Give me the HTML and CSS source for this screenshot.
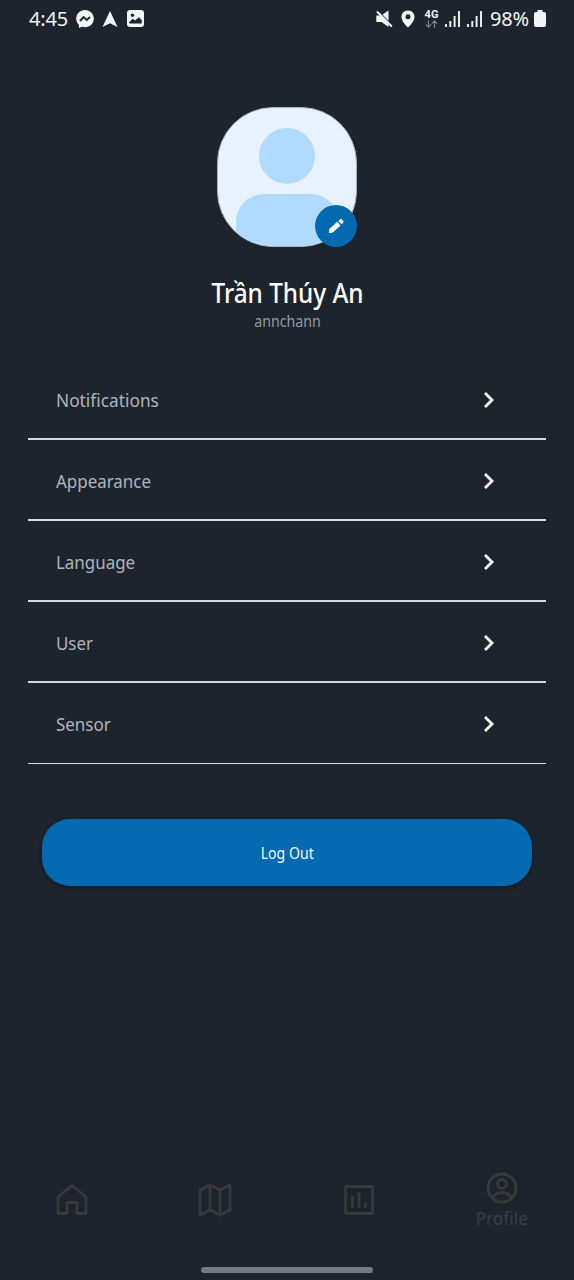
FILE: index.html
```html
<!DOCTYPE html>
<html lang="vi">
<head>
<meta charset="utf-8">
<title>Profile</title>
<link rel="stylesheet" href="styles.css">
</head>
<body>
<div class="screen">
  <header class="status">
    <div class="status-left">
      <span class="clock">4:45</span>
      <svg class="messenger" width="18" height="18" viewBox="0 0 18 18"><path fill="#f1f5f6" d="M9 0C4 0 .2 3.700.2 8.600c0 2.600 1 4.700 2.700 6.200V18l3-1.200c1 .3 2 .4 3.100.4 5 0 8.800-3.700 8.800-8.600S14 0 9 0z"/><path d="M4 11l3.500-4 3.300 3L14 7" fill="none" stroke="#1c242e" stroke-width="1.900"/></svg>
      <svg class="nav-arrow" width="16" height="16" viewBox="0 0 16 16"><path fill="#f1f5f6" d="M8 0l7.500 16L8 12.300.5 16z"/></svg>
      <svg width="17" height="17" viewBox="0 0 17 17"><rect width="17" height="17" rx="3" fill="#f1f5f6"/><circle cx="5.500" cy="5.300" r="1.700" fill="#1c242e"/><path fill="#1c242e" d="M2.300 13.500V12l3.400-3.200 2.300 1.800L12 7.300l2.800 3v3.200z"/></svg>
    </div>
    <div class="status-right">
      <svg class="mute" width="17" height="18" viewBox="0 0 17 18"><path fill="#f1f5f6" d="M.3 5.500h4.200l8 8.400V17L5.500 12H.3zM6.500 4.600L12.500.5v10.200z"/><path stroke="#f1f5f6" stroke-width="2" d="M1 1.500L15.800 16.500"/></svg>
      <svg class="pin" width="14" height="18" viewBox="0 0 14 18"><path fill="#f1f5f6" fill-rule="evenodd" d="M7 .5C3.200.5.500 3.300.5 6.900.5 11 5 15.500 7 17.500c2-2 6.500-6.500 6.500-10.600C13.500 3.300 10.800.5 7 .5zM7 4.300a2.500 2.500 0 1 1 0 5 2.500 2.500 0 0 1 0-5z"/></svg>
      <span class="network"><b>4G</b><svg width="13" height="8" viewBox="0 0 13 8"><path d="M3.500.3v6.500M.8 4.300l2.700 2.800 2.700-2.800M9.500 7.700V1M6.800 3.600L9.500.9l2.700 2.700" fill="none" stroke="#7c838a" stroke-width="1.200"/></svg></span>
      <svg class="signal" width="15" height="16" viewBox="0 0 15 16"><path stroke="#f1f5f6" stroke-width="1.900" d="M1 16v-3M5.300 16v-6M9.600 16V5M14 16V0"/></svg>
      <svg class="signal second" width="15" height="16" viewBox="0 0 15 16"><path stroke="#f1f5f6" stroke-width="1.900" d="M1 16v-3M5.300 16v-6M9.600 16V5M14 16V0"/></svg>
      <span class="percent">98%</span>
      <svg class="battery" width="12" height="17" viewBox="0 0 12 17"><path fill="#f1f5f6" d="M3.500 0h5v2H10a2 2 0 0 1 2 2v11a2 2 0 0 1-2 2H2a2 2 0 0 1-2-2V4a2 2 0 0 1 2-2h1.500z"/></svg>
    </div>
  </header>

  <section class="identity">
    <div class="avatar">
      <div class="portrait"><div class="head"></div><div class="body"></div></div>
      <button class="edit" aria-label="Edit"><svg width="18" height="18" viewBox="0 0 18 18"><path fill="#fff" d="M1.800 16.300l.5-4.300 8-7.200 3.300 3.600-7.800 7.200zM11.300 3.900l1.700-1.500q1-.7 1.900.2l1.300 1.400q.8 1-.1 1.800l-1.500 1.500z"/></svg></button>
    </div>
    <h1 class="name">Trần Thúy An</h1>
    <p class="handle">annchann</p>
  </section>

  <ul class="menu">
    <li><span class="wide">Notifications</span><svg class="chevron" width="12" height="18" viewBox="0 0 12 18"><path d="M2 2l7 7-7 7"/></svg></li>
    <li><span>Appearance</span><svg class="chevron" width="12" height="18" viewBox="0 0 12 18"><path d="M2 2l7 7-7 7"/></svg></li>
    <li><span>Language</span><svg class="chevron" width="12" height="18" viewBox="0 0 12 18"><path d="M2 2l7 7-7 7"/></svg></li>
    <li><span>User</span><svg class="chevron" width="12" height="18" viewBox="0 0 12 18"><path d="M2 2l7 7-7 7"/></svg></li>
    <li><span>Sensor</span><svg class="chevron" width="12" height="18" viewBox="0 0 12 18"><path d="M2 2l7 7-7 7"/></svg></li>
  </ul>

  <button class="logout"><span>Log Out</span></button>

  <nav class="tabs">
    <a><svg width="34" height="34" viewBox="0 0 34 34"><path d="M3 14L17 2.500 31 14v16.500h-9v-11H12v11H3z"/></svg></a>
    <a><svg width="34" height="34" viewBox="0 0 34 34"><path d="M2 7l10-5 10 5 10-5v25l-10 5-10-5-10 5zM12 2v25M22 7v25"/></svg></a>
    <a><svg width="34" height="34" viewBox="0 0 34 34"><rect x="3.500" y="3.500" width="27" height="27" rx="1"/><path d="M10.500 13v12M17 9.500V25M23.500 19.500V25"/></svg></a>
    <a class="active"><svg width="34" height="34" viewBox="0 0 34 34"><circle cx="17" cy="17" r="14"/><circle cx="17" cy="13" r="4.500"/><path d="M8 27c1.500-4 5-5.500 9-5.500s7.500 1.500 9 5.500"/></svg><span>Profile</span></a>
  </nav>
  <div class="gesture"></div>
</div>
</body>
</html>
```
FILE: styles.css
```css
* { box-sizing: border-box; }
body { margin: 0; background: #1d242e; font-family: "Noto Sans", sans-serif; }
button { border: 0; padding: 0; font-family: inherit; }
svg { display: block; flex: none; }
.screen { width: 574px; height: 1280px; display: flex; flex-direction: column; background: #1d242e; overflow: hidden; }
.status { height: 37px; padding: 0 28px 0 29px; display: flex; justify-content: space-between; align-items: center; color: #f1f5f6; }
.status-left, .status-right { display: flex; align-items: center; }
.clock { font-size: 20px; line-height: 26px; width: 39px; margin-right: 8px; white-space: nowrap; letter-spacing: -.2px; }
.messenger { margin-right: 8px; }
.nav-arrow { margin-right: 9px; }
.mute { margin-right: 8px; }
.pin { margin-right: 9px; }
.network { width: 15px; height: 18px; margin-right: 6px; display: flex; flex-direction: column; align-items: center; }
.network b { font: bold 11px/10px "Roboto", sans-serif; }
.signal { margin-right: 7px; }
.second { margin-right: 8px; }
.percent { font-size: 20px; line-height: 26px; width: 42px; letter-spacing: -.2px; margin-right: 2px; white-space: nowrap; }
.identity { padding-top: 70px; display: flex; flex-direction: column; align-items: center; height: 322.4px; flex: none; }
.avatar { position: relative; width: 140px; height: 140px; }
.portrait { width: 140px; height: 140px; border: 1px solid #a9b0b8; border-radius: 56px; background: #e8f2ff; overflow: hidden; display: flex; flex-direction: column; align-items: center; padding-top: 20px; }
.head { width: 56px; height: 56px; border-radius: 50%; background: #b0daff; flex: none; }
.body { width: 103px; height: 60px; margin-top: 10px; border-radius: 28px 28px 0 0; background: #b0daff; flex: none; }
.edit { position: absolute; right: 0; bottom: 0; width: 42px; height: 42px; border-radius: 50%; background: #036ab0; display: grid; place-items: center; }
.name { margin: 28px 0 0 1px; font-size: 27px; line-height: 36px; font-weight: 500; color: #fff; white-space: nowrap; transform: scaleX(.9); }
.handle { margin: 0 0 0 1px; font-size: 16px; line-height: 20px; color: #9299a2; transform: scaleX(.885); }
.menu { list-style: none; margin: 0 28px; padding: 0; }
.menu li { height: 80.85px; padding: 2px 51px 0 28px; border-bottom: 2px solid #ced8df; display: flex; justify-content: space-between; align-items: center; color: #adb4bc; font-size: 18.5px; }
.menu li:last-child { border-bottom-width: 1px; }
.menu span { transform: scaleX(.915); transform-origin: left; }
.menu .wide { transform: scaleX(.935); }
.chevron { margin-top: 1px; }
.chevron path { fill: none; stroke: #fff; stroke-width: 2.800; }
.logout { margin: 55.400px 42px 0; height: 67px; border-radius: 28px; background: #036ab0; color: #f3f8fc; font-size: 15.5px; box-shadow: 0 2px 4px rgba(0,0,0,.3); flex: none; }
.logout span { display: inline-block; padding-top: 1px; transform: scaleX(.91); }
.tabs { margin-top: auto; height: 70px; display: grid; grid-template-columns: repeat(4, 1fr); flex: none; }
.tabs a { display: flex; flex-direction: column; align-items: center; justify-content: center; font-size: 18px; font-weight: 500; line-height: 26px; color: #353b42; }
.tabs span { transform: scaleX(.94); }
.tabs svg { fill: none; stroke: #39393a; stroke-width: 2.800; stroke-linejoin: round; }
.tabs .active svg { margin-top: 1px; }
.gesture { width: 172px; height: 6px; border-radius: 3px; background: #757b84; margin: 32px auto 7px; flex: none; }
```
